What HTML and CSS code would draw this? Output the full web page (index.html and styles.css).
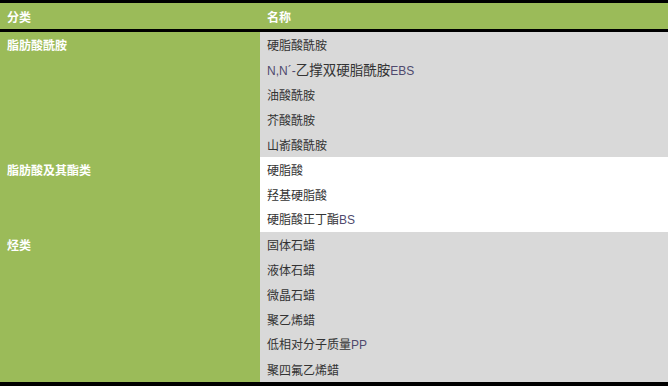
FILE: index.html
```html
<!DOCTYPE html>
<html lang="zh-CN">
<head>
    <meta charset="UTF-8">
    <title>润滑剂分类</title>
    <link rel="stylesheet" href="styles.css">
</head>
<body>
    <table class="lube-table">
        <thead>
            <tr>
                <th class="col-type">分类</th>
                <th class="col-name">名称</th>
            </tr>
        </thead>
        <tbody class="group-gray">
            <tr><td class="type" rowspan="5">脂肪酸酰胺</td><td>硬脂酸酰胺</td></tr>
            <tr><td><span class="latin">N,N´-</span><span class="big">乙撑双硬脂酰胺</span><span class="latin">EBS</span></td></tr>
            <tr><td>油酸酰胺</td></tr>
            <tr><td>芥酸酰胺</td></tr>
            <tr><td>山嵛酸酰胺</td></tr>
        </tbody>
        <tbody class="group-white">
            <tr><td class="type" rowspan="3">脂肪酸及其酯类</td><td>硬脂酸</td></tr>
            <tr><td>羟基硬脂酸</td></tr>
            <tr><td>硬脂酸正丁酯<span class="latin">BS</span></td></tr>
        </tbody>
        <tbody class="group-gray">
            <tr><td class="type" rowspan="6">烃类</td><td>固体石蜡</td></tr>
            <tr><td>液体石蜡</td></tr>
            <tr><td>微晶石蜡</td></tr>
            <tr><td>聚乙烯蜡</td></tr>
            <tr><td>低相对分子质量<span class="latin">PP</span></td></tr>
            <tr><td>聚四氟乙烯蜡</td></tr>
        </tbody>
    </table>
</body>
</html>
```

FILE: styles.css
```css
body {
    margin: 0;
    background: #fff;
    font-family: "Noto Sans CJK SC", "Noto Sans", sans-serif;
    font-size: 12px;
}

.lube-table {
    width: 668px;
    border-collapse: collapse;
    border-top: 3px solid #000;
    border-bottom: 4px solid #000;
}

.lube-table th {
    height: 26px;
    padding: 0 7px;
    background: #9bbb59;
    color: #fff;
    font-weight: bold;
    text-align: left;
    border-bottom: 3px solid #000;
}

.col-type {
    width: 246px;
}

.lube-table td {
    height: 25px;
    padding: 0 7px;
    color: #333;
    line-height: 16px;
}

.lube-table td.type {
    background: #9bbb59;
    color: #fff;
    font-weight: bold;
    vertical-align: top;
    padding-top: 5px;
}

.group-gray td {
    background: #d9d9d9;
}

.group-white td {
    background: #fff;
}

.big {
    font-size: 13.5px;
}

.latin {
    font-family: "Liberation Sans", Arial, sans-serif;
    color: #4f4a6e;
}
```
